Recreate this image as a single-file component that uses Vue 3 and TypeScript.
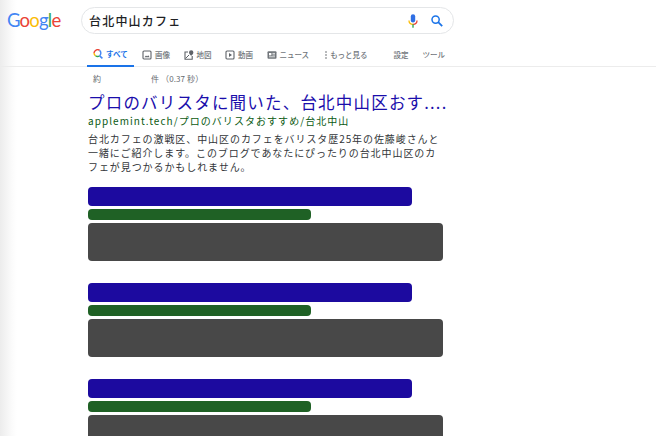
<script setup lang="ts">
interface Tab {
  label: string;
  icon: string;
  active?: boolean;
}

const tabs: Tab[] = [
  { label: "すべて", icon: "search", active: true },
  { label: "画像", icon: "image" },
  { label: "地図", icon: "map" },
  { label: "動画", icon: "video" },
  { label: "ニュース", icon: "news" },
  { label: "もっと見る", icon: "more" },
];

const placeholders = [0, 1, 2];
</script>

<template>
  <div class="page">
    <header class="header">
      <div class="top">
        <div class="logo" aria-label="Google">
          <span class="b">G</span><span class="r">o</span><span class="y">o</span><span class="b">g</span><span class="g">l</span><span class="r">e</span>
        </div>
        <div class="search">
          <span class="query">台北中山カフェ</span>
          <svg class="mic" width="10" height="14" viewBox="0 0 10 14">
            <rect x="2.8" y="0.3" width="4.4" height="8.2" rx="2.2" fill="#2f6fe4" />
            <path d="M1 6.5c0 2.5 1.8 3.8 4 3.8" fill="none" stroke="#fbbc05" stroke-width="1.3" />
            <path d="M9 6.5c0 2.5-1.8 3.8-4 3.8" fill="none" stroke="#ea4335" stroke-width="1.3" />
            <rect x="4.3" y="10.3" width="1.4" height="3.4" fill="#34a853" />
          </svg>
          <svg class="lens" width="12" height="12" viewBox="0 0 12 12">
            <circle cx="4.6" cy="4.6" r="3.6" fill="none" stroke="#1a73e8" stroke-width="1.5" />
            <path d="M7.2 7.2L11.2 11.2" stroke="#1a73e8" stroke-width="1.8" />
          </svg>
        </div>
      </div>
      <nav class="tabs">
        <div class="tab-list">
          <div v-for="tab in tabs" :key="tab.label" class="tab" :class="{ active: tab.active, dots: tab.icon === 'more' }">
            <svg v-if="tab.icon === 'search'" width="10" height="10" viewBox="0 0 10 10">
              <path d="M6.6 1.4A3.5 3.5 0 0 0 1 4" fill="none" stroke="#ea4335" stroke-width="1.4" />
              <path d="M1 4a3.5 3.5 0 0 0 1.6 2.8" fill="none" stroke="#fbbc05" stroke-width="1.4" />
              <path d="M2.6 6.8a3.5 3.5 0 0 0 4 0" fill="none" stroke="#34a853" stroke-width="1.4" />
              <path d="M6.6 6.8L9.4 9.4" stroke="#4285f4" stroke-width="1.6" />
              <path d="M6.6 1.4A3.5 3.5 0 0 1 6.6 6.8" fill="none" stroke="#4285f4" stroke-width="1.4" />
            </svg>
            <svg v-else-if="tab.icon === 'image'" width="10" height="10" viewBox="0 0 10 10">
              <rect x="1" y="1" width="8" height="8" rx="1" fill="none" stroke="#5f6368" stroke-width="1.1" />
              <path d="M2.5 7.3L4 5.4l1.1 1.2L6.2 5.2l1.4 2.1z" fill="#5f6368" />
            </svg>
            <svg v-else-if="tab.icon === 'map'" width="10" height="10" viewBox="0 0 10 10">
              <path d="M4 2H1v7.2h7.2V6" fill="none" stroke="#5f6368" stroke-width="1.1" />
              <path d="M7.2 0.2a2.2 2.2 0 0 0-2.2 2.2c0 1.5 2.2 3.4 2.2 3.4s2.2-1.9 2.2-3.4a2.2 2.2 0 0 0-2.2-2.2z" fill="#5f6368" />
              <path d="M1.5 8.5L5 5" stroke="#5f6368" stroke-width="1" />
            </svg>
            <svg v-else-if="tab.icon === 'video'" width="10" height="10" viewBox="0 0 10 10">
              <rect x="1" y="1" width="8" height="8" rx="1" fill="none" stroke="#5f6368" stroke-width="1.1" />
              <path d="M4 3l3 2-3 2z" fill="#5f6368" />
            </svg>
            <svg v-else-if="tab.icon === 'news'" width="10" height="10" viewBox="0 0 10 10">
              <rect x="0.5" y="1.2" width="9" height="7.6" rx="1" fill="#70757a" />
              <rect x="2" y="3" width="2.4" height="2.4" fill="#fff" />
              <path d="M5.4 3.4H8M5.4 5H8M2 6.8H8" stroke="#fff" stroke-width="0.8" />
            </svg>
            <svg v-else width="6" height="10" viewBox="0 0 6 10">
              <circle cx="3" cy="2" r="0.8" fill="#5f6368" />
              <circle cx="3" cy="5" r="0.8" fill="#5f6368" />
              <circle cx="3" cy="8" r="0.8" fill="#5f6368" />
            </svg>
            <span>{{ tab.label }}</span>
          </div>
        </div>
        <div class="tools">
          <span>設定</span>
          <span>ツール</span>
        </div>
      </nav>
    </header>

    <main class="results">
      <div class="stats"><span>約</span><span>件 （0.37 秒）</span></div>
      <a class="title">プロのバリスタに聞いた、台北中山区おす....</a>
      <div class="url">applemint.tech/プロのバリスタおすすめ/台北中山</div>
      <p class="snippet">台北カフェの激戦区、中山区のカフェをバリスタ歴25年の佐藤峻さんと一緒にご紹介します。このブログであなたにぴったりの台北中山区のカフェが見つかるかもしれません。</p>

      <div v-for="n in placeholders" :key="n" class="skeleton">
        <div class="bar-title"></div>
        <div class="bar-url"></div>
        <div class="bar-text"></div>
      </div>
    </main>
  </div>
</template>

<style>
html,
body {
  margin: 0;
  overflow: hidden;
  background: #fff;
}
</style>

<style scoped>
.page {
  width: 656px;
  height: 436px;
  overflow: hidden;
  background: linear-gradient(90deg, #ececec 0, #fbfbfb 12px, #fff 17px);
  font-family: "Noto Sans CJK JP", "Liberation Sans", sans-serif;
}

.header {
  height: 66px;
  border-bottom: 1px solid #ececec;
}

.top {
  display: flex;
  align-items: center;
  padding-top: 7px;
}

.logo {
  width: 54px;
  margin-left: 7px;
  margin-right: 20px;
  font-family: "Lato", "Liberation Sans", sans-serif;
  font-size: 18.5px;
  line-height: 25px;
  letter-spacing: -0.8px;
  white-space: nowrap;
}

.b { color: #4285f4; }
.r { color: #ea4335; }
.y { color: #fbbc05; }
.g { color: #34a853; }

.search {
  box-sizing: border-box;
  display: flex;
  align-items: center;
  width: 373px;
  height: 27px;
  padding: 0 10px 0 7px;
  background: #fff;
  border: 1px solid #e4e6e8;
  border-radius: 14px;
}

.query {
  flex: 1;
  color: #202124;
  font-size: 12px;
  font-weight: 500;
  letter-spacing: 1.2px;
}

.mic {
  margin-right: 13px;
}

.tabs {
  display: flex;
  justify-content: space-between;
  width: 445px;
  margin-top: 8px;
  padding-left: 87px;
  box-sizing: border-box;
  color: #70757a;
  font-size: 7.5px;
}

.tab-list {
  display: flex;
  gap: 13.5px;
}

.tab {
  display: flex;
  flex-shrink: 0;
  align-items: center;
  gap: 3px;
  height: 25px;
  box-sizing: border-box;
  font-weight: 500;
  white-space: nowrap;
}

.tab.active {
  width: 47px;
  margin-right: -5.5px;
  padding-left: 6px;
  color: #1a73e8;
  font-weight: 700;
  border-bottom: 2px solid #1a73e8;
}

.tab.dots {
  gap: 1.5px;
}

.tools {
  display: flex;
  gap: 14px;
  line-height: 25px;
  font-weight: 500;
}

.results {
  width: 355px;
  margin-left: 88px;
}

.stats {
  display: flex;
  gap: 50px;
  padding-left: 5px;
  color: #666a6f;
  font-size: 8px;
  line-height: 23px;
  letter-spacing: 0.1px;
}

.title {
  display: block;
  color: #1a0dab;
  font-size: 16.5px;
  line-height: 24px;
  letter-spacing: 1.2px;
  white-space: nowrap;
}

.url {
  color: #0b5a12;
  font-size: 10px;
  line-height: 14px;
  letter-spacing: 1.05px;
  white-space: nowrap;
}

.snippet {
  margin: 4px 0 0;
  color: #333639;
  font-size: 10px;
  line-height: 14px;
  letter-spacing: 0.92px;
}

.skeleton {
  margin-top: 13px;
}

.skeleton + .skeleton {
  margin-top: 22px;
}

.bar-title {
  width: 324px;
  height: 19px;
  background: #1c0a9f;
  border-radius: 4px;
}

.bar-url {
  width: 223px;
  height: 11px;
  margin-top: 3px;
  background: #1f6125;
  border-radius: 4px;
}

.bar-text {
  width: 355px;
  height: 38px;
  margin-top: 3px;
  background: #484848;
  border-radius: 4px;
}
</style>
